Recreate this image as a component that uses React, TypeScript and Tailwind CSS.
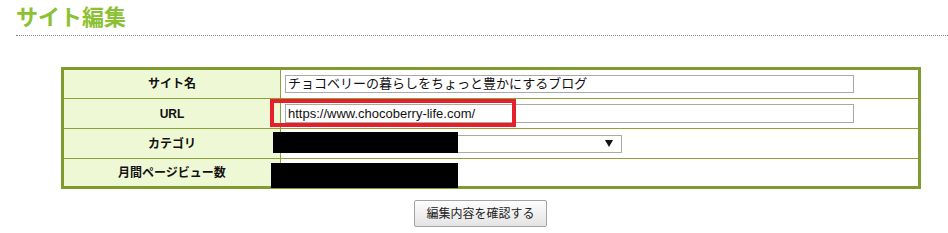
import React from 'react';

const rows = [
  { label: 'サイト名', h: 'h-[28px]' },
  { label: 'URL', h: 'h-[30px] border-t border-[#8ba23a]' },
  { label: 'カテゴリ', h: 'h-[30px] border-t border-[#8ba23a]' },
  { label: '月間ページビュー数', h: 'h-[28px] border-t border-[#8ba23a]' },
];

const App: React.FC = () => {
  const renderValue = (i: number) => {
    if (i === 0) {
      return (
        <div className="w-[569px] h-[18px] border border-[#a9a9a9] bg-white px-[2px] text-[13px] leading-[16px] text-[#111] whitespace-nowrap overflow-hidden">
          チョコベリーの暮らしをちょっと豊かにするブログ
        </div>
      );
    }
    if (i === 1) {
      return (
        <div className="w-[569px] h-[19px] border border-[#a9a9a9] bg-white px-[2px] text-[13px] leading-[17px] text-[#111] whitespace-nowrap overflow-hidden">
          https://www.chocoberry-life.com/
        </div>
      );
    }
    if (i === 2) {
      return (
        <div className="w-[337px] h-[18px] border border-[#a9a9a9] bg-white flex items-center justify-end pr-[8px]">
          <svg width="8" height="7" viewBox="0 0 8 7">
            <path d="M0 0 H8 L4 7 Z" fill="#111" />
          </svg>
        </div>
      );
    }
    return null;
  };

  return (
    <div
      className="relative w-[948px] h-[233px] bg-white overflow-hidden"
      style={{ fontFamily: '"Liberation Sans", "Noto Sans CJK JP", sans-serif' }}
    >
      <div className="ml-[16px] pt-[3px] pb-[2px] border-b border-dotted border-[#8a8a8a] text-[22px] leading-[30px] font-bold text-[#8bc132]">
        サイト編集
      </div>

      <div className="ml-[61px] mt-[31px] w-[860px] border-[3px] border-[#7f9a2e]">
        {rows.map((r, i) => (
          <div key={r.label} className={`flex ${r.h}`}>
            <div className="w-[217px] shrink-0 bg-[#eff8d4] border-r border-[#8ba23a] flex items-center justify-center text-[12px] font-bold text-[#111]">
              {r.label}
            </div>
            <div className="flex-1 flex items-center pl-[4px]">{renderValue(i)}</div>
          </div>
        ))}
      </div>

      <div className="ml-[414px] mt-[11px] w-[133px] h-[27px] border border-[#a3a3a3] rounded-[2px] bg-gradient-to-b from-[#fdfdfd] to-[#e4e4e4] flex items-center justify-center text-[12px] text-[#222]">
        編集内容を確認する
      </div>

      {/* annotations over the screenshot */}
      <div className="absolute left-[270px] top-[99px] w-[246px] h-[28px] border-[4px] border-[#e5202a]" />
      <div className="absolute left-[273px] top-[132px] w-[185px] h-[21px] bg-black" />
      <div className="absolute left-[271px] top-[163px] w-[187px] h-[25px] bg-black" />
    </div>
  );
};

export default App;
